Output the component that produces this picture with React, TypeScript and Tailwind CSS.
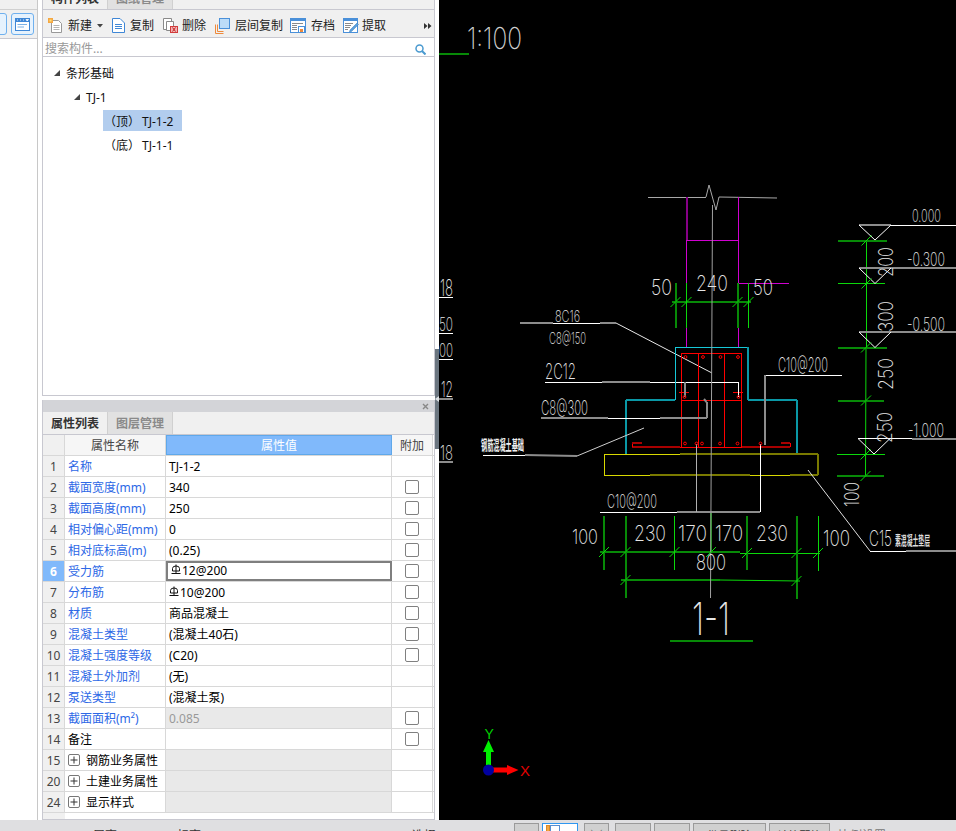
import React from "react"

type Row = { n: number; name: string; val?: string; blue?: boolean; check?: boolean; grey?: boolean; group?: boolean; rebar?: boolean; active?: boolean }

const rows: Row[] = [
  { n: 1, name: "名称", val: "TJ-1-2", blue: true },
  { n: 2, name: "截面宽度(mm)", val: "340", blue: true, check: true },
  { n: 3, name: "截面高度(mm)", val: "250", blue: true, check: true },
  { n: 4, name: "相对偏心距(mm)", val: "0", blue: true, check: true },
  { n: 5, name: "相对底标高(m)", val: "(0.25)", blue: true, check: true },
  { n: 6, name: "受力筋", val: "12@200", blue: true, check: true, rebar: true, active: true },
  { n: 7, name: "分布筋", val: "10@200", blue: true, check: true, rebar: true },
  { n: 8, name: "材质", val: "商品混凝土", blue: true, check: true },
  { n: 9, name: "混凝土类型", val: "(混凝土40石)", blue: true, check: true },
  { n: 10, name: "混凝土强度等级", val: "(C20)", blue: true, check: true },
  { n: 11, name: "混凝土外加剂", val: "(无)", blue: true },
  { n: 12, name: "泵送类型", val: "(混凝土泵)", blue: true },
  { n: 13, name: "截面面积(m²)", val: "0.085", blue: true, check: true, grey: true },
  { n: 14, name: "备注", check: true },
  { n: 15, name: "钢筋业务属性", group: true },
  { n: 20, name: "土建业务属性", group: true },
  { n: 24, name: "显示样式", group: true },
]

function RebarMark() {
  return (
    <svg width="10" height="11" viewBox="0 0 10 11" className="mr-[1px] -mt-[3px] shrink-0">
      <path d="M1.5 7V4.5Q1.5 2 5 2T8.5 4.5V7H1.5M5 0.5V9.5M0.5 9.5H9.5" fill="none" stroke="#111" strokeWidth="1" />
    </svg>
  )
}

function PropRow({ r }: { r: Row }) {
  return (
    <div className="flex h-[21px] border-b border-[#d8d8d8]">
      <div className={"w-[22px] pt-[2px] flex items-center justify-center border-r border-[#d8d8d8] " + (r.active ? "bg-[#80b9fb] text-white font-bold" : "bg-[#f0f0f0] text-[#444]")}>
        {r.n}
      </div>
      <div className={"w-[101px] pt-[2px] flex items-center px-[3px] border-r border-[#d8d8d8] whitespace-nowrap overflow-hidden " + (r.blue ? "text-[#2d68e6]" : "text-black")}>
        {r.group && (
          <span className="w-[12px] h-[12px] mr-[6px] -mt-[2px] border border-[#777] rounded-[2px] flex items-center justify-center shrink-0">
            <svg width="8" height="8" viewBox="0 0 8 8"><path d="M0.5 4H7.5M4 0.5V7.5" stroke="#333" /></svg>
          </span>
        )}
        {r.name}
      </div>
      <div
        className={
          "w-[226px] flex items-center " +
          (r.active ? "border-2 border-[#7f7f7f] px-[3px] " : "pt-[2px] px-[3px] border-r border-[#d8d8d8] ") +
          (r.grey ? "bg-[#e9e9e9] text-[#999]" : r.group ? "bg-[#e9e9e9]" : "text-black")
        }
      >
        {r.rebar && <RebarMark />}
        {r.val}
      </div>
      <div className="w-[41px] flex items-center justify-center border-r border-[#d8d8d8]">
        {r.check && <span className="w-[14px] h-[14px] border border-[#808080] rounded-[2px] bg-white" />}
      </div>
    </div>
  )
}

function Tabs({ a, b }: { a: string; b: string }) {
  return (
    <div className="flex h-[23px] bg-[#f0f0f0] border-b border-[#c8c8d0] shrink-0 text-[12px] font-semibold">
      <div className="w-[65px] pt-[2px] flex items-center justify-center text-[#333] border-r border-[#d0d0d0]">{a}</div>
      <div className="w-[65px] pt-[2px] flex items-center justify-center text-[#8a8a8a] bg-[#e1e1e1] border-r border-[#d0d0d0]">{b}</div>
    </div>
  )
}

function IconNew() {
  return (
    <svg width="15" height="16" viewBox="0 0 15 16" className="shrink-0">
      <path d="M3.5 2.5H10.5L13.5 5.5V14.5H3.5Z" fill="#fff" stroke="#999" />
      <path d="M5.5 7.5H11.5M5.5 9.5H11.5M5.5 11.5H11.5" stroke="#b5b5b5" />
      <rect x="0" y="0" width="5" height="5" fill="#f5a742" />
      <rect x="1.5" y="1.5" width="2" height="2" fill="#ffe27a" />
    </svg>
  )
}
function IconCopy() {
  return (
    <svg width="13" height="15" viewBox="0 0 13 15" className="shrink-0">
      <path d="M0.5 0.5H8L12.5 5V14.5H0.5Z" fill="#fff" stroke="#3f87d6" />
      <path d="M3 6.5H10M3 8.5H10M3 10.5H10" stroke="#3f87d6" />
    </svg>
  )
}
function IconDelete() {
  return (
    <svg width="15" height="15" viewBox="0 0 15 15" className="shrink-0">
      <path d="M0.5 0.5H8.5V11.5H0.5Z" fill="#fff" stroke="#8a8a8a" />
      <path d="M3.5 3.5H10.5V12.5H3.5Z" fill="#fff" stroke="#8a8a8a" />
      <rect x="7.5" y="8.5" width="7" height="6" fill="#f1b3b3" stroke="#d23b3b" />
      <path d="M9.5 9.5L12.5 13.5M12.5 9.5L9.5 13.5" stroke="#c41f1f" />
    </svg>
  )
}
function IconLayer() {
  return (
    <svg width="15" height="16" viewBox="0 0 15 16" className="shrink-0">
      <path d="M0.5 15.5V6.5M0.5 15.5H8.5M2.5 13.5V6.5M2.5 13.5H8.5" stroke="#ee8a3c" fill="none" />
      <rect x="4.5" y="0.5" width="10" height="10" fill="#bcdcf8" stroke="#4a90d9" />
    </svg>
  )
}
function IconSave() {
  return (
    <svg width="16" height="15" viewBox="0 0 16 15" className="shrink-0">
      <rect x="0.5" y="0.5" width="15" height="14" fill="#fff" stroke="#4a90d9" />
      <rect x="0" y="0" width="16" height="3" fill="#4a90d9" />
      <path d="M2 5.5H13M2 7.5H7M2 9.5H7M2 11.5H7" stroke="#8a8a8a" />
      <rect x="8.5" y="8.5" width="6" height="6" fill="#fff" stroke="#4a90d9" />
      <rect x="10" y="11" width="3" height="3" fill="#ee8a3c" />
    </svg>
  )
}
function IconExtract() {
  return (
    <svg width="16" height="15" viewBox="0 0 16 15" className="shrink-0">
      <rect x="0.5" y="0.5" width="14" height="14" fill="#fff" stroke="#4a90d9" />
      <rect x="0" y="0" width="15" height="3" fill="#4a90d9" />
      <path d="M2 5.5H10M2 7.5H8M2 9.5H7M2 11.5H5" stroke="#8a8a8a" />
      <path d="M7 12L14 5L15.5 6.5L8.5 13.5L6.5 14Z" fill="#5a9fdd" stroke="#3a7fbd" strokeWidth="0.5" />
    </svg>
  )
}

function Tri() {
  return (
    <svg width="6" height="6" viewBox="0 0 6 6" className="shrink-0 -mt-[2px]">
      <path d="M6 0V6H0Z" fill="#444" />
    </svg>
  )
}

// CAD drawing helpers -------------------------------------------------
type Seg = [number, number, number, number, string]

const WHITE = "#ffffff"
const GREY = "#8c8c8c"
const THIN = "#a8a8a8"
const CYAN = "#16c8d8"
const CYAN2 = "#0a98a6"
const RED = "#ff0000"
const RED2 = "#a80000"
const GREEN = "#0bd80b"
const GREEN2 = "#078a07"
const MAG = "#d000d0"
const MAG2 = "#870087"
const YEL = "#d8d800"
const YEL2 = "#7a7a00"

// dim colours stand for lines that the screenshot's scaling smeared over two pixels
const thick = [GREY, CYAN2, RED2, GREEN2, MAG2, YEL2]

const segs: Seg[] = [
  // break line
  [648, 197, 706, 197, THIN],
  [706, 197, 709, 185, THIN],
  [709, 185, 716, 210, THIN],
  [716, 210, 719, 197, THIN],
  [719, 197, 777, 198, THIN],
  // wall
  [686.5, 197, 686.5, 240, MAG2],
  [686.5, 240, 686.5, 283, MAG],
  [738, 197, 738, 283, MAG],
  [686.5, 240, 738, 240, MAG],
  [738, 283, 789, 283, MAG],
  [686.5, 328, 686.5, 347, MAG],
  [738, 328, 738, 347, MAG],
  // top dim
  [672, 302, 751, 302, GREEN2],
  [675.5, 283, 675.5, 328, GREEN2],
  [686.5, 283, 686.5, 328, GREEN],
  [737.5, 283, 737.5, 328, GREEN2],
  [748.5, 283, 748.5, 328, GREEN],
  // 8C16 leader
  [520, 323, 553, 323, GREY],
  [553, 323, 600, 323, WHITE],
  [600, 323, 616, 323, GREY],
  [616, 323, 712, 373, "#e8e8e8"],
  // stirrups
  [681.5, 353, 741.5, 353, RED],
  [681.5, 353, 681.5, 447, RED],
  [741.5, 353, 741.5, 447, RED],
  [698, 353, 698, 447, RED],
  [724.5, 353, 724.5, 447, RED],
  [681.5, 400, 741.5, 400, RED],
  [632, 447, 680, 447, RED2],
  [680, 447, 742, 447, RED],
  [742, 447, 790, 447, RED2],
  [632, 443, 632, 447, RED],
  [632, 443, 642, 443, RED2],
  [790, 443, 790, 447, RED],
  [781, 443, 790, 443, RED2],
  [679, 392, 689, 392, RED],
  [733, 392, 743, 392, RED],
  // 2C12 leader
  [545, 382, 602, 382, WHITE],
  [602, 382, 650, 382, GREY],
  [650, 382, 738, 382, WHITE],
  [684.5, 382, 684.5, 397, GREY],
  [738.5, 382, 738.5, 397, WHITE],
  // cyan outline
  [675, 347, 748, 347, CYAN],
  [675, 347, 675, 400, CYAN],
  [626, 400, 675, 400, CYAN2],
  [626, 400, 626, 454, CYAN2],
  [748, 347, 748, 400, CYAN2],
  [748, 400, 797, 400, CYAN2],
  [797, 400, 797, 454, CYAN2],
  // yellow cushion
  [604, 454, 680, 454, YEL],
  [680, 454, 818, 454, YEL2],
  [604, 454, 604, 475, YEL],
  [818, 454, 818, 475, YEL2],
  [604, 475, 650, 475, YEL],
  [650, 475, 750, 475, YEL2],
  [750, 475, 790, 475, YEL],
  [790, 475, 818, 475, YEL2],
  // C8@300 leader
  [541, 418, 608, 418, GREY],
  [608, 418, 660, 418, WHITE],
  [660, 418, 706.5, 418, GREY],
  [706.5, 418, 706.5, 402, GREY],
  [706.5, 402, 704, 399, GREY],
  // C10@200 right
  [765, 375, 842, 375, WHITE],
  [765, 375, 765, 445, GREY],
  // base label
  [483, 455, 525, 455, WHITE],
  [525, 455, 577, 456, GREY],
  [577, 456, 644, 428, "#cfcfcf"],
  // C10@200 bottom
  [600, 512, 677, 512, WHITE],
  [677, 512, 760, 512, GREY],
  [696, 444, 696, 512, "#b0b0b0"],
  [760, 444, 760, 512, WHITE],
  // bottom dims
  [600, 552, 740, 552, GREEN2],
  [740, 553, 820, 553, GREEN],
  [604, 516, 604, 570, GREEN2],
  [625.5, 516, 625.5, 598, GREEN2],
  [674.5, 516, 674.5, 570, GREEN],
  [711, 513, 711, 552, GREEN2],
  [747, 516, 747, 570, GREEN2],
  [796.5, 516, 796.5, 599, GREEN2],
  [818, 516, 818, 571, GREEN],
  [621, 580, 720, 580, GREEN2],
  [720, 580, 800, 581, GREEN],
  [670, 641, 753, 641, GREEN2],
  // C15 leader
  [808, 470, 870, 551, "#e0e0e0"],
  [870, 551, 906, 551, WHITE],
  [906, 551, 956, 551, GREY],
  // elevation dims
  [866.5, 240, 866.5, 347, GREEN],
  [866, 347, 865.5, 476, GREEN],
  [838, 240.5, 887, 240.5, GREEN2],
  [838, 283.5, 885, 283.5, GREEN],
  [838, 347.5, 887, 347.5, GREEN2],
  [838, 400.5, 884, 400.5, GREEN2],
  [837, 454.5, 885, 454.5, GREEN],
  [837, 476, 884, 476, GREEN2],
  // level marks
  [859, 225, 891, 225, GREY],
  [891, 225.5, 956, 225.5, WHITE],
  [859, 225, 875, 240, WHITE],
  [875, 240, 891, 225, WHITE],
  [859, 268, 956, 268, GREY],
  [859, 268, 875, 283.5, WHITE],
  [875, 283.5, 891, 268, WHITE],
  [859, 332, 956, 332, GREY],
  [859, 332, 875, 347.5, WHITE],
  [875, 347.5, 891, 332, WHITE],
  [858, 438.5, 912, 438.5, WHITE],
  [912, 438.5, 956, 438.5, GREY],
  [858, 438.5, 874, 454, WHITE],
  [874, 454, 890, 438.5, WHITE],
  // stubs on the left edge
  [439, 297, 453, 297, WHITE],
  [439, 333, 453, 333, WHITE],
  [439, 359, 453, 359, WHITE],
  [439, 398.5, 453, 398.5, GREY],
  [439, 462, 453, 462, GREY],
  // center line runs over everything
  [712.5, 205, 710.5, 598, "#a0a0a0"],
]

const ticks: [number, number, string][] = [
  [675.5, 302, GREEN], [686.5, 302, GREEN], [737.5, 302, GREEN], [748.5, 302, GREEN],
  [604, 552, GREEN], [625.5, 552, GREEN], [674.5, 552, GREEN], [711, 552, GREEN], [747, 553, GREEN], [796.5, 553, GREEN], [818, 553, GREEN],
  [625.5, 580, GREEN], [796.5, 581, GREEN],
  [866.5, 240.5, GREEN], [866.5, 283.5, GREEN], [866, 347.5, GREEN], [866, 400.5, GREEN], [865.5, 454.5, GREEN], [865.5, 476, GREEN],
]

const dots: [number, number][] = [
  [685.5, 357], [703, 357], [720.5, 357], [738, 357],
  [684.5, 397], [738.5, 397],
  [685, 443.5], [696.5, 443.5], [702, 443.5], [720, 443.5], [737.5, 443.5], [760.5, 443.5],
]

// x = left, y = baseline, w = width of the run, h = height of the digits
function T({ x, y, w, h, s, rot, fill = "#e6e6e6", cjk }: { x: number; y: number; w: number; h: number; s: string; rot?: boolean; fill?: string; cjk?: boolean }) {
  return (
    <text
      x={x}
      y={y}
      fontSize={cjk ? h : h / 0.73}
      textLength={w}
      lengthAdjust="spacingAndGlyphs"
      fill={fill}
      transform={rot ? `rotate(-90 ${x} ${y})` : undefined}
      className={cjk ? "font-['Noto_Sans_CJK_SC'] font-bold" : "font-['Inter'] font-extralight"}
    >
      {s}
    </text>
  )
}

function CadDrawing() {
  return (
    <svg width="517" height="820" viewBox="439 0 517 820" className="block">
      <rect x="439" y="0" width="517" height="820" fill="#000" />
      {segs.map(([a, b, c, d, col], i) => (
        <line
          key={i}
          x1={a}
          y1={b}
          x2={c}
          y2={d}
          stroke={col}
          strokeWidth={thick.includes(col) ? 2 : 1}
          shapeRendering={a === c || b === d ? "crispEdges" : undefined}
        />
      ))}
      <line x1="439" y1="54" x2="469" y2="54" stroke={GREEN2} strokeWidth="2" />
      {ticks.map(([x, y, c], i) => (
        <line key={i} x1={x - 5} y1={y + 5} x2={x + 5} y2={y - 5} stroke={c} strokeWidth="1" />
      ))}
      {dots.map(([x, y], i) => (
        <circle key={i} cx={x} cy={y} r="1.4" fill="none" stroke={RED} strokeWidth="1" />
      ))}

      <T x={467} y={49} w={55} h={22} s="1:100" fill="#cfcfcf" />
      <T x={651} y={295} w={21} h={16} s="50" />
      <T x={696} y={291} w={32} h={16} s="240" />
      <T x={753} y={295} w={20} h={16} s="50" />
      <T x={555} y={322} w={25} h={12} s="8C16" />
      <T x={549} y={344} w={37} h={12} s="C8@150" />
      <T x={545} y={379} w={31} h={16} s="2C12" />
      <T x={541} y={415} w={47} h={15} s="C8@300" />
      <T x={778} y={372} w={50} h={15} s="C10@200" />
      <T x={607} y={508} w={50} h={14} s="C10@200" />
      <T x={481} y={450} w={43} h={14} s="钢筋混凝土基础" cjk fill="#f0f0f0" />

      <T x={572} y={544} w={26} h={15} s="100" />
      <T x={634} y={541} w={32} h={16} s="230" />
      <T x={678} y={541} w={29} h={16} s="170" />
      <T x={715} y={541} w={28} h={16} s="170" />
      <T x={756} y={541} w={32} h={16} s="230" />
      <T x={823} y={546} w={27} h={16} s="100" />
      <T x={696} y={570} w={30} h={16} s="800" />
      <T x={692} y={635} w={38} h={33} s="1-1" />
      <T x={869} y={546} w={23} h={16} s="C15" />
      <T x={895} y={545} w={35} h={13} s="素混凝土垫层" cjk fill="#dcdcdc" />

      <T x={912} y={222} w={29} h={13} s="0.000" />
      <T x={907} y={266} w={38} h={14} s="-0.300" />
      <T x={907} y={331} w={38} h={14} s="-0.500" />
      <T x={908} y={437} w={36} h={14} s="-1.000" />

      <T x={893} y={277} w={30} h={15} s="200" rot />
      <T x={893} y={332} w={31} h={15} s="300" rot />
      <T x={893} y={390} w={32} h={15} s="250" rot />
      <T x={892} y={443} w={31} h={15} s="250" rot />
      <T x={859} y={507} w={25} h={15} s="100" rot />

      <T x={440} y={296} w={13} h={17} s="18" />
      <T x={439} y={331} w={14} h={14} s="50" />
      <T x={439} y={357} w={14} h={14} s="00" />
      <T x={441} y={397} w={12} h={16} s="12" />
      <T x={440} y={460} w={13} h={15} s="18" />

      {/* axes */}
      <path d="M486 765V752H483L488.5 740L494 752H491V765Z" fill="#00f000" />
      <path d="M492 767.5H507V765L518.5 770L507 775V772.5H492Z" fill="#ff0000" />
      <circle cx="488.5" cy="770" r="5.5" fill="#0000a0" />
      <text x="484.5" y="739" fontSize="14" fill="#00d000" className="font-['Liberation_Sans']">Y</text>
      <text x="520" y="776" fontSize="15" fill="#e00000" className="font-['Liberation_Sans']">X</text>
    </svg>
  )
}

const statusBtn = "h-[12px] shrink-0 bg-[#d0d0d0] border border-[#9a9a9a] text-[11px] leading-[14px] text-[#333] text-center overflow-hidden whitespace-nowrap pt-[5px]"

export default function App() {
  return (
    <div className="w-[956px] h-[831px] overflow-hidden flex flex-col bg-[#dfdfe1] text-[12px] leading-none font-['Noto_Sans','Noto_Sans_CJK_SC',sans-serif]">
      <div className="flex h-[820px] shrink-0 bg-white">
        {/* left tool strip */}
        <div className="w-[38px] shrink-0 border-r border-[#c8c8c8] flex flex-col">
          <div className="h-[10px] bg-[#f0f0f0] border-b border-[#d0d0d0]" />
          <div className="h-[29px] bg-[#f0f0f0] border-b border-[#c8c8d0] relative overflow-hidden flex items-center gap-[4px] -ml-[3px]">
            <div className="w-[10px] h-[22px] shrink-0 rounded-[3px] border border-[#6fb0ee] bg-[#e6f2fd]" />
            <div className="w-[23px] h-[22px] shrink-0 rounded-[3px] border border-[#6fb0ee] bg-[#e6f2fd] flex items-center justify-center">
              <svg width="15" height="13" viewBox="0 0 15 13">
                <rect x="0.5" y="0.5" width="14" height="12" fill="#fff" stroke="#3f87d6" />
                <rect x="0" y="0" width="15" height="4" fill="#3f87d6" />
                <path d="M2 2H3M5 2H6M8 2H9M11 1.5H13.5L12.2 3Z" stroke="#fff" fill="#fff" strokeWidth="0.8" />
                <path d="M2.5 6.5H12M2.5 9H9" stroke="#7db2e6" />
              </svg>
            </div>
          </div>
        </div>
        <div className="w-[4px] shrink-0" />

        {/* panels */}
        <div className="w-[393px] shrink-0 flex flex-col">
          <div className="h-[409px] -mt-[13px] shrink-0 flex flex-col border-x border-b border-[#c8c8d0] bg-white">
            <Tabs a="构件列表" b="图纸管理" />
            <div className="h-[28px] shrink-0 pt-[4px] bg-[#f0f0f0] border-b border-[#c8c8d0] flex items-center pl-[5px] text-[#222] whitespace-nowrap">
              <IconNew />
              <span className="ml-[5px]">新建</span>
              <svg width="6" height="4" viewBox="0 0 6 4" className="ml-[5px] shrink-0"><path d="M0 0H6L3 3.5Z" fill="#444" /></svg>
              <span className="ml-[9px]"><IconCopy /></span>
              <span className="ml-[5px]">复制</span>
              <span className="ml-[9px]"><IconDelete /></span>
              <span className="ml-[4px]">删除</span>
              <span className="ml-[9px]"><IconLayer /></span>
              <span className="ml-[5px]">层间复制</span>
              <span className="ml-[7px]"><IconSave /></span>
              <span className="ml-[5px]">存档</span>
              <span className="ml-[8px]"><IconExtract /></span>
              <span className="ml-[3px]">提取</span>
              <svg width="8" height="6" viewBox="0 0 8 6" className="ml-[38px] shrink-0"><path d="M0 0L3.5 3L0 6ZM4 0L7.5 3L4 6Z" fill="#333" /></svg>
            </div>
            <div className="h-[19px] shrink-0 pt-[4px] border-b border-[#c8c8d0] flex items-center justify-between pl-[2px] pr-[8px] text-[#999]">
              <span>搜索构件...</span>
              <svg width="11" height="11" viewBox="0 0 11 11"><circle cx="4.5" cy="4.5" r="3.5" fill="none" stroke="#4a9ad0" strokeWidth="1.5" /><path d="M7 7L10.5 10.5" stroke="#4a9ad0" strokeWidth="2" /></svg>
            </div>
            <div className="flex-1 pt-[4px] text-[#111]">
              <div className="h-[24px] pt-[2px] flex items-center pl-[11px] gap-[6px]"><Tri />条形基础</div>
              <div className="h-[24px] pt-[2px] flex items-center pl-[31px] gap-[6px]"><Tri />TJ-1</div>
              <div className="h-[24px] pt-[1px] flex items-start pl-[60px]">
                <div className="h-[21px] w-[79px] pt-[2px] bg-[#b2cdee] flex items-center pl-[1px]">
                  <span>（顶）</span><span className="ml-[2px]">TJ-1-2</span>
                </div>
              </div>
              <div className="h-[24px] pt-[2px] flex items-center pl-[61px]">
                <span>（底）</span><span className="ml-[2px]">TJ-1-1</span>
              </div>
            </div>
          </div>
          <div className="h-[4px] shrink-0" />
          <div className="flex-1 flex flex-col border-x border-b border-[#c8c8d0] bg-white min-h-0">
            <div className="h-[12px] shrink-0 bg-[#d3d4d8] flex items-center justify-end pr-[5px]">
              <svg width="7" height="7" viewBox="0 0 7 7"><path d="M1 1L6 6M6 1L1 6" stroke="#888" strokeWidth="1.4" /></svg>
            </div>
            <Tabs a="属性列表" b="图层管理" />
            <div className="flex h-[21px] shrink-0 border-b border-[#d8d8d8] text-[#444]">
              <div className="w-[22px] bg-[#f0f0f0] border-r border-[#d8d8d8]" />
              <div className="w-[101px] pt-[2px] bg-[#f6f6f6] border-r border-[#d8d8d8] flex items-center justify-center">属性名称</div>
              <div className="w-[226px] pt-[2px] bg-[#80b9fb] border border-[#5fa8ea] flex items-center justify-center text-white">属性值</div>
              <div className="w-[41px] pt-[2px] bg-[#f6f6f6] border-r border-[#d8d8d8] flex items-center justify-center">附加</div>
            </div>
            {rows.map((r) => (
              <PropRow key={r.n} r={r} />
            ))}
            <div className="flex-1 w-[22px] bg-[#f0f0f0]" />
          </div>
        </div>

        {/* splitter */}
        <div className="w-[4px] shrink-0">
          <div className="mt-[349px] h-[100px] bg-[#6b7680] flex items-center">
            <svg width="4" height="6" viewBox="0 0 4 6"><path d="M4 0V6L0 3Z" fill="#dfe3e6" /></svg>
          </div>
        </div>

        <div className="flex-1 bg-black">
          <CadDrawing />
        </div>
      </div>

      {/* status bar, only its upper edge is in view */}
      <div className="flex-1 flex items-start whitespace-nowrap text-[#333]">
        <span className="ml-[93px] w-[84px] pt-[10px]">层高:</span>
        <span className="w-[235px] pt-[10px]">标高:</span>
        <span className="w-[102px] pt-[10px]">选择</span>
        <div className="mt-[3px] flex">
          <div className={statusBtn + " w-[25px]"}>⊥</div>
          <div className="w-[36px] h-[12px] shrink-0 ml-[3px] bg-white border border-[#2f97f0] pl-[3px] pt-[1px] flex">
            <span className="w-[4px] h-[9px] bg-[#f5a742] border border-[#d98a2a]" />
            <span className="w-[10px] h-[9px] border border-[#5a8fd0]" />
          </div>
          <div className={statusBtn + " w-[25px] ml-[6px]"}>╳</div>
          <div className={statusBtn + " w-[36px] ml-[6px]"}>∠</div>
          <div className={statusBtn + " w-[36px] ml-[3px]"}>⊥</div>
          <div className={statusBtn + " w-[73px] ml-[3px]"}>批量删除</div>
          <div className={statusBtn + " w-[61px] ml-[3px]"}>计算配筋</div>
          <span className="ml-[8px] pt-[7px] text-[#777]">比例设置</span>
        </div>
      </div>
    </div>
  )
}
